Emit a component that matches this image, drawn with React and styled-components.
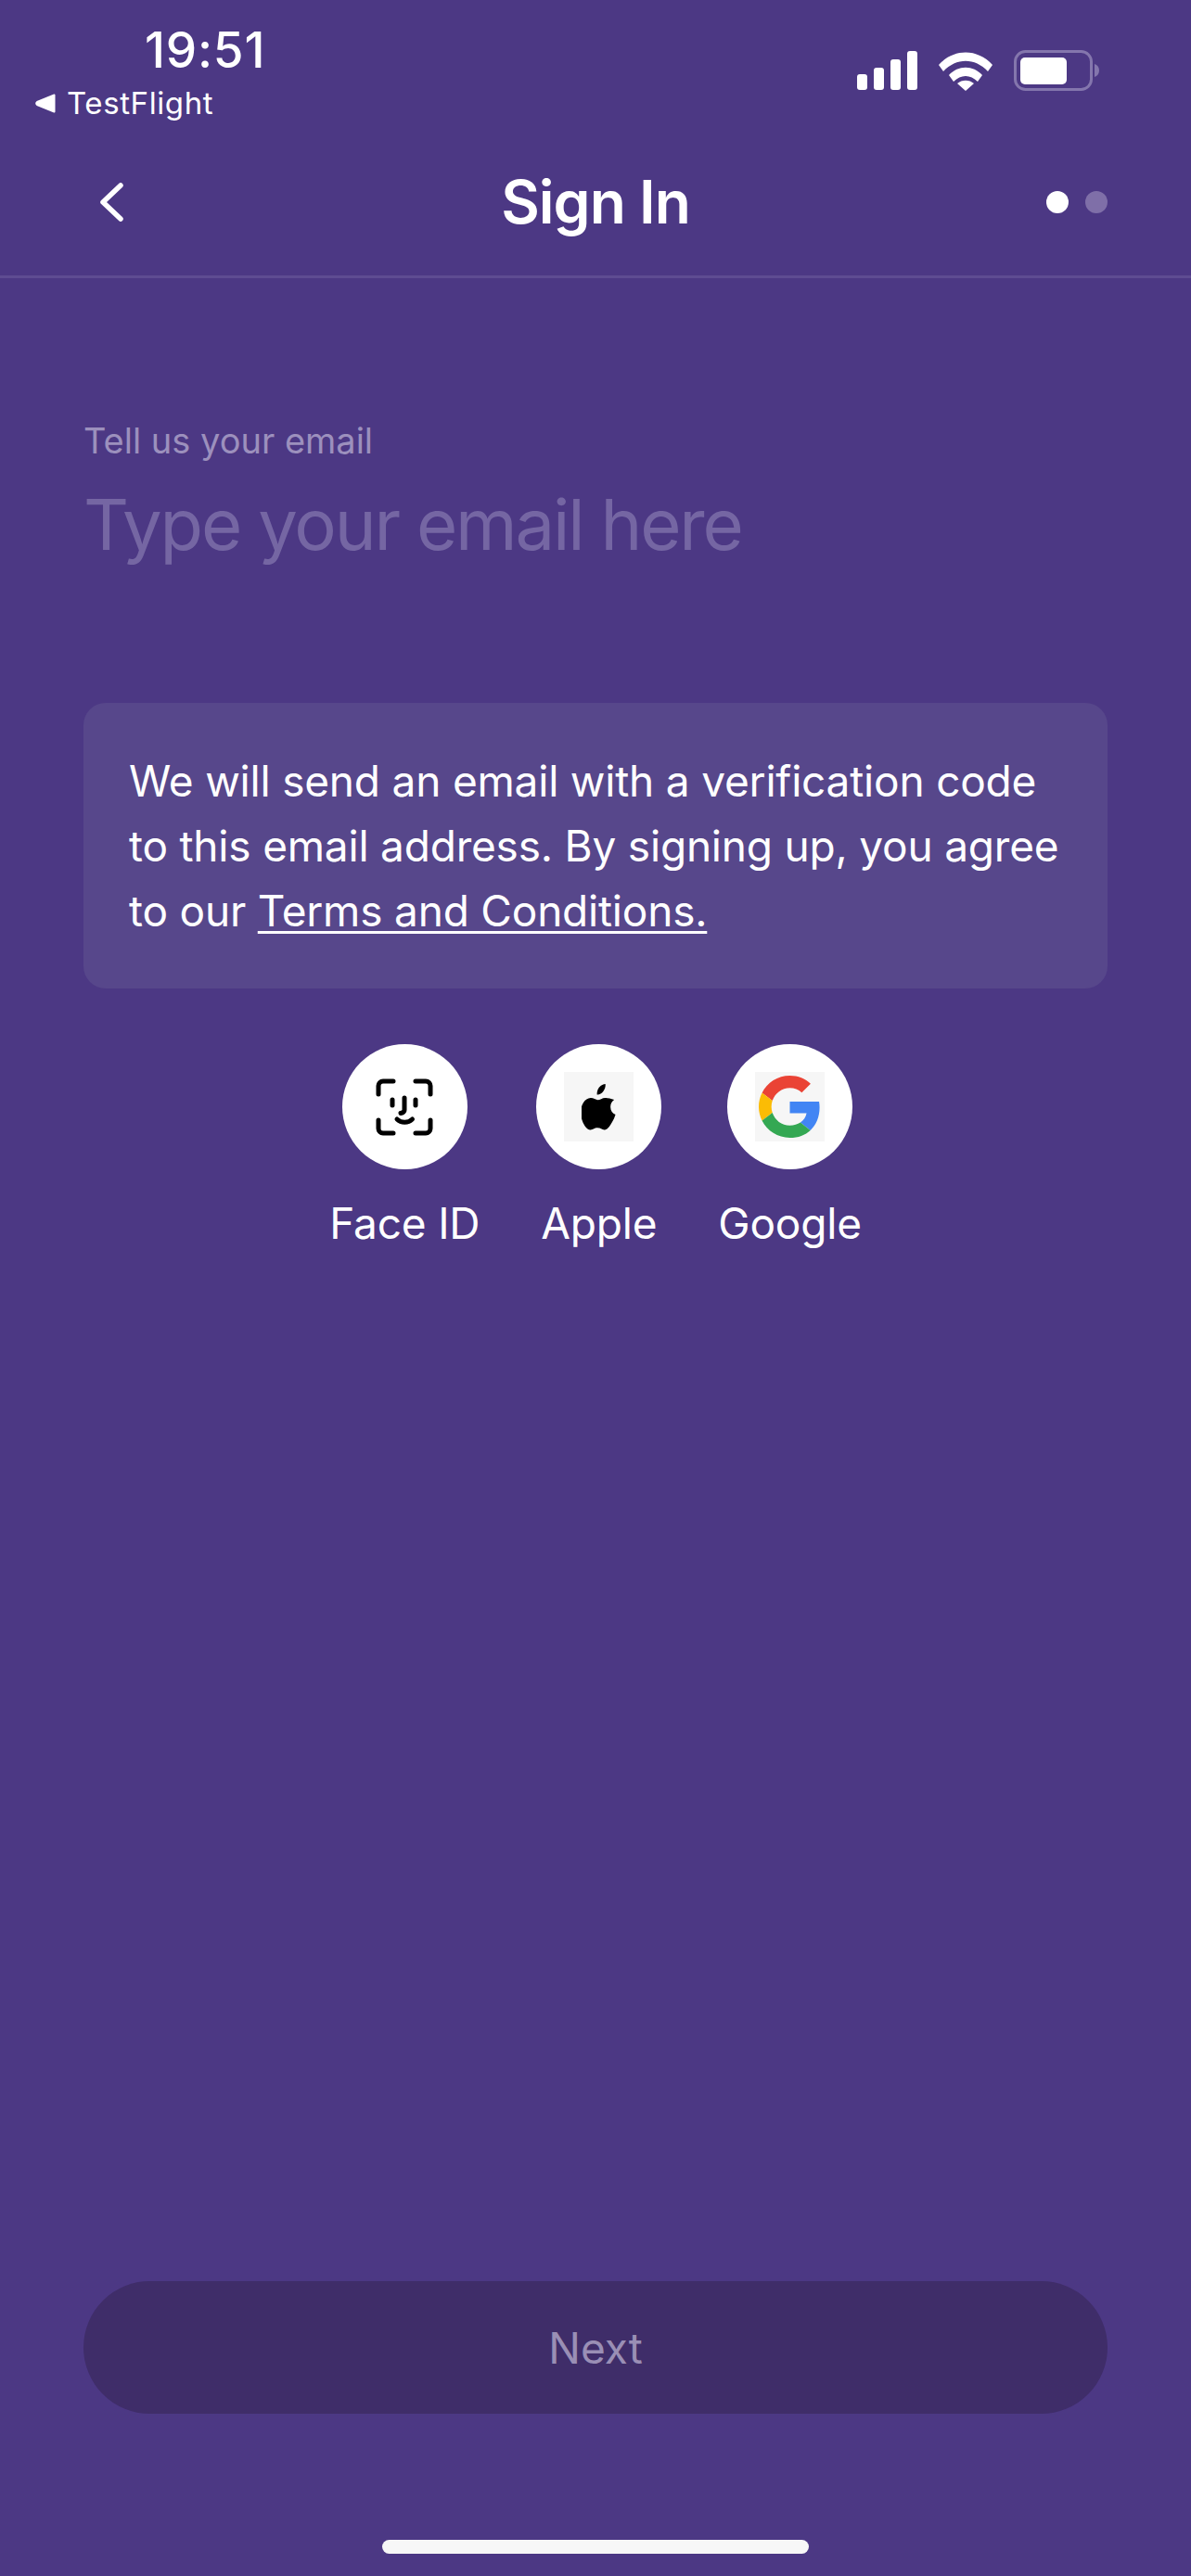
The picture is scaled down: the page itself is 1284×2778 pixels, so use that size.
import React from 'react';
import styled, { createGlobalStyle } from 'styled-components';

const Global = createGlobalStyle`
  html, body { margin: 0; padding: 0; background: #4c3884; }
  * { box-sizing: border-box; }
`;
const font = `Inter, "Liberation Sans", sans-serif`;
const Page = styled.div`
  width: 1284px; height: 2778px; background: #4c3884; color: #fff; font-family: ${font};
  display: flex; flex-direction: column; overflow: hidden;
`;
const StatusBar = styled.header`
  height: 132px; display: flex; justify-content: space-between; align-items: flex-start; padding: 0 98px 0 37px;
`;
const StatusLeft = styled.div`display: flex; flex-direction: column; align-items: flex-start;`;
const Time = styled.div`
  font-size: 53px; font-weight: 500; line-height: 54px; margin: 27px 0 0 119px; letter-spacing: .8px;
`;
const BackApp = styled.div`
  display: flex; align-items: center; gap: 12px; font-size: 33px; line-height: 40px; margin-top: 10px; letter-spacing: .6px;
`;
const StatusIcons = styled.div`display: flex; align-items: center; margin-top: 54px;`;
const Signal = styled.svg`width: 66px; height: 42px; margin-right: 22px;`;
const Wifi = styled.svg`width: 58px; height: 43px; margin-right: 23px;`;
const Battery = styled.svg`width: 93px; height: 44px;`;
const NavBar = styled.nav`
  height: 168px; display: grid; grid-template-columns: 1fr auto 1fr; align-items: center;
  padding: 7px 90px 0 104px; border-bottom: 3px solid #5e4c91;
`;
const Back = styled.svg`width: 32px; height: 44px;`;
const Title = styled.h1`margin: 0; font-size: 64px; font-weight: 600; line-height: 76px; letter-spacing: -1px; position: relative; left: -7px;`;
const Dots = styled.div`display: flex; justify-content: flex-end; gap: 18px;`;
const Dot = styled.span`width: 24px; height: 24px; border-radius: 50%; background: ${p => p.$on ? '#fff' : '#7f6fa8'};`;
const Main = styled.main`flex: 1; display: flex; flex-direction: column; padding: 152px 90px 0;`;
const Label = styled.label`font-size: 38px; line-height: 46px; color: #9c90bd;`;
const Placeholder = styled.div`font-size: 76px; line-height: 92px; margin-top: 21px; color: #7566a3; letter-spacing: -2.2px;`;
const Notice = styled.p`
  margin: 147px 0 0; padding: 49px 40px 0 49px; height: 308px; background: #57478b; border-radius: 24px;
  font-size: 46px; line-height: 70px; color: #fff; letter-spacing: -.2px;
`;
const Terms = styled.a`color: #fff; text-decoration: underline; text-decoration-thickness: 3px; text-underline-offset: 5px;`;
const Providers = styled.div`display: flex; justify-content: center; gap: 61px; margin-top: 60px;`;
const Provider = styled.div`display: flex; flex-direction: column; align-items: center;`;
const Circle = styled.div`width: 135px; height: 135px; border-radius: 50%; background: #fff; display: flex; align-items: center; justify-content: center;`;
const LogoTile = styled.div`width: 75px; height: 75px; background: #f6f6f6; display: flex; align-items: center; justify-content: center;`;
const ProviderName = styled.span`font-size: 46px; line-height: 56px; margin-top: 30px; letter-spacing: -.2px;`;
const Spacer = styled.div`flex: 1;`;
const NextButton = styled.button`
  height: 143px; border: 0; border-radius: 72px; background: #3f2d69; color: #9a8fb5; font: 400 46px ${font}; width: 100%;
`;
const HomeWrap = styled.div`display: flex; justify-content: center; padding: 136px 0 24px;`;
const HomeBar = styled.div`width: 460px; height: 15px; border-radius: 8px; background: #f7f7f7;`;

function FaceIcon() {
  return (
    <svg width="62" height="62" viewBox="0 0 62 62" fill="none" stroke="#000" strokeWidth="5" strokeLinecap="round" strokeLinejoin="round">
      <path d="M3 17V8a5 5 0 0 1 5-5h11M43 3h11a5 5 0 0 1 5 5v9M59 45v9a5 5 0 0 1-5 5H43M19 59H8a5 5 0 0 1-5-5v-9" />
      <path d="M18 23v6M43 23v6" />
      <path d="M31 21v13c0 2-1.500 3-4 3.500" />
      <path d="M23 44c4.500 4.300 12 4.300 16.500 0" />
    </svg>
  );
}
function AppleIcon() {
  return (
    <svg width="37" height="50" viewBox="0 0 40 48" preserveAspectRatio="none" fill="#000">
      <path d="M27.800 0c.3 3-.9 5.700-2.600 7.700-1.800 2.100-4.500 3.500-7.200 3.300-.4-2.900 1-5.800 2.600-7.600C22.500 1.400 25.500.1 27.800 0z" />
      <path d="M38 16.400c-2.900 1.900-4.400 4.500-4.300 7.500.1 3.600 2.300 6.400 5.800 7.700-.9 2.700-2.200 5.500-4 8.100-2.300 3.400-4.700 7.600-8.400 7.700-3.500.1-4.600-2-8.500-2-4 0-5.200 1.900-8.400 2.100-3.600.1-6.300-3.800-8.400-7.200C-1.800 33.500-2 25 2 19.400c2.100-3 5.300-4.800 8.500-4.900 3.300-.1 5.900 2.100 8.500 2.100 2.500 0 5.500-2.600 9.400-2.200 1.700.1 6.300.7 9.600 2z" />
    </svg>
  );
}
function GoogleIcon() {
  return (
    <svg width="67" height="67" viewBox="0 0 48 48">
      <path fill="#EA4335" d="M24 9.500c3.540 0 6.710 1.220 9.210 3.600l6.850-6.850C35.900 2.380 30.470 0 24 0 14.620 0 6.510 5.380 2.560 13.220l7.980 6.190C12.430 13.720 17.740 9.500 24 9.500z" />
      <path fill="#4285F4" d="M46.980 24.550c0-1.570-.15-3.090-.38-4.550H24v9.020h12.940c-.58 2.960-2.260 5.480-4.780 7.180l7.730 6c4.510-4.180 7.090-10.360 7.090-17.650z" />
      <path fill="#FBBC05" d="M10.530 28.590c-.48-1.450-.76-2.990-.76-4.590s.27-3.140.76-4.590l-7.980-6.190C.92 16.460 0 20.120 0 24c0 3.880.92 7.540 2.560 10.780l7.970-6.190z" />
      <path fill="#34A853" d="M24 48c6.480 0 11.930-2.130 15.890-5.810l-7.730-6c-2.150 1.450-4.920 2.300-8.160 2.300-6.260 0-11.570-4.220-13.470-9.910l-7.980 6.190C6.510 42.620 14.620 48 24 48z" />
    </svg>
  );
}

export default function App() {
  return (
    <Page>
      <Global />
      <StatusBar>
        <StatusLeft>
          <Time>19:51</Time>
          <BackApp>
            <svg width="23" height="23" viewBox="0 0 23 23"><path d="M21.500 2.500v18L3 13a1.800 1.800 0 0 1 0-3z" fill="#fff" stroke="#fff" strokeWidth="2" strokeLinejoin="round" /></svg>
            TestFlight
          </BackApp>
        </StatusLeft>
        <StatusIcons>
          <Signal viewBox="0 0 66 42" fill="#fff">
            <rect x="0" y="25" width="11" height="17" rx="3" />
            <rect x="18" y="18" width="11" height="24" rx="3" />
            <rect x="36" y="9" width="11" height="33" rx="3" />
            <rect x="54" y="0" width="11" height="42" rx="3" />
          </Signal>
          <Wifi viewBox="0 0 58 43" fill="#fff">
            <path d="M0 15C16-3 42-3 58 15l-5 7C39 7 19 7 5 22z" />
            <path d="M11 26c10-11 26-11 36 0l-5 7c-8-8-18-8-26 0z" />
            <path d="M20 35c5-4.500 13-4.500 18 0l-9 8z" />
          </Wifi>
          <Battery viewBox="0 0 93 44">
            <rect x="1.500" y="1.500" width="82" height="41" rx="11" fill="none" stroke="#8476ad" strokeWidth="3" />
            <rect x="7" y="8" width="50" height="29" rx="5" fill="#fff" />
            <path d="M87 15c3 1 5 3.500 5 7s-2 6-5 7z" fill="#8476ad" />
          </Battery>
        </StatusIcons>
      </StatusBar>
      <NavBar>
        <Back viewBox="0 0 32 44" fill="none" stroke="#fff" strokeWidth="5.500" strokeLinecap="round" strokeLinejoin="round"><path d="M26 4 7 22l19 18" /></Back>
        <Title>Sign In</Title>
        <Dots><Dot $on /><Dot /></Dots>
      </NavBar>
      <Main>
        <Label>Tell us your email</Label>
        <Placeholder>Type your email here</Placeholder>
        <Notice>We will send an email with a verification code to this email address. By signing up, you agree to our <Terms>Terms and Conditions.</Terms></Notice>
        <Providers>
          <Provider><Circle><FaceIcon /></Circle><ProviderName>Face ID</ProviderName></Provider>
          <Provider><Circle><LogoTile><AppleIcon /></LogoTile></Circle><ProviderName>Apple</ProviderName></Provider>
          <Provider><Circle><LogoTile><GoogleIcon /></LogoTile></Circle><ProviderName>Google</ProviderName></Provider>
        </Providers>
        <Spacer />
        <NextButton>Next</NextButton>
        <HomeWrap><HomeBar /></HomeWrap>
      </Main>
    </Page>
  );
}
